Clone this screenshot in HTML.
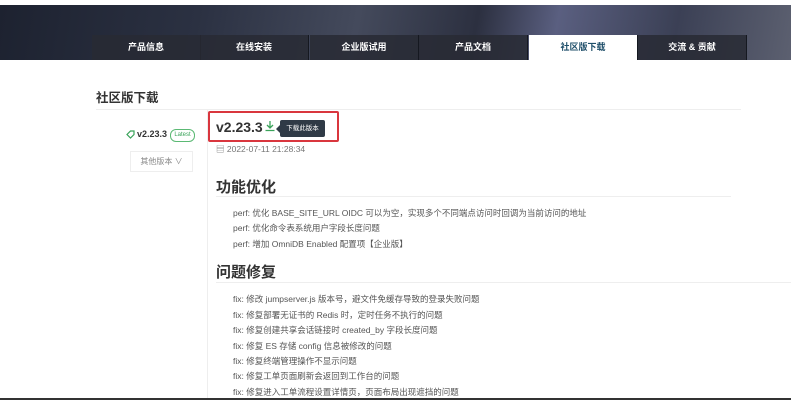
<!DOCTYPE html>
<html><head><meta charset="utf-8"><style>
body{margin:0;width:791px;height:400px;overflow:hidden;background:#fff;font-family:"Liberation Sans","Noto Sans CJK SC",sans-serif;position:relative}
.ab{position:absolute}
.banner{left:0;top:5px;width:791px;height:55px;background:linear-gradient(100deg,#1d2230 0%,#2b3142 25%,#444a5c 45%,#2c3040 60%,#5a5f80 70%,#3b4055 85%,#5c6070 100%)}
.tab{top:35px;height:25px;width:109px;background:rgba(40,42,52,.85);color:#fff;font-size:9px;font-weight:bold;text-align:center;line-height:25px;border-right:1px solid #151820;box-sizing:border-box}
.tab.on{background:#fff;color:#1f4f6a}
.li{left:233px;font-size:8.5px;color:#555;white-space:nowrap}
h2{margin:0;font-size:15px;font-weight:bold;color:#333;position:absolute;left:216px}
</style></head><body>
<div class="ab banner"></div>
<div class="ab tab" style="left:92px">产品信息</div>
<div class="ab tab" style="left:200px">在线安装</div>
<div class="ab tab" style="left:310px">企业版试用</div>
<div class="ab tab" style="left:419px">产品文档</div>
<div class="ab tab on" style="left:529px">社区版下载</div>
<div class="ab tab" style="left:638px">交流 &amp; 贡献</div>
<div class="ab" style="left:96px;top:87px;font-size:12.5px;font-weight:bold;color:#333">社区版下载</div>
<div class="ab" style="left:96px;top:109px;width:645px;height:1px;background:#eee"></div>
<div class="ab" style="left:207px;top:110px;width:1px;height:290px;background:#eee"></div>
<svg class="ab" style="left:126px;top:130px" width="9" height="9" viewBox="0 0 9 9"><path d="M1 4.5L4.5 1H8v3.5L4.5 8z" fill="none" stroke="#3aa35a" stroke-width="1.2"/></svg>
<div class="ab" style="left:137px;top:129px;font-size:9px;color:#333;font-weight:bold">v2.23.3</div>
<div class="ab" style="left:170px;top:129px;width:23px;height:11px;border:1px solid #5bb974;border-radius:6px;font-size:6px;color:#3aa35a;text-align:center;line-height:11px">Latest</div>
<div class="ab" style="left:130px;top:151px;width:63px;height:21px;border:1px solid #eee;box-sizing:border-box;font-size:8px;color:#888;text-align:center;line-height:20px">其他版本 ∨</div>
<div class="ab" style="left:208px;top:111px;width:131px;height:31px;border:2px solid #d9363e;box-sizing:border-box;border-radius:2px"></div>
<div class="ab" style="left:216px;top:119px;font-size:14px;font-weight:bold;color:#333">v2.23.3</div>
<svg class="ab" style="left:264px;top:120px" width="12" height="12" viewBox="0 0 12 12"><path d="M6 1v7M3 5l3 3 3-3M1.5 10.5h9" stroke="#3aa35a" stroke-width="1.3" fill="none"/></svg>
<div class="ab" style="left:280px;top:120px;width:45px;height:17px;background:#2f3a46;border-radius:2px;color:#fff;font-size:6.5px;text-align:center;line-height:17px">下载此版本</div>
<div class="ab" style="left:276px;top:125px;width:0;height:0;border:4px solid transparent;border-right-color:#2f3a46;border-left:0"></div>
<div class="ab" style="left:216px;top:143px;font-size:8.5px;color:#777">▤ 2022-07-11 21:28:34</div>
<h2 style="top:176px">功能优化</h2>
<div class="ab" style="left:216px;top:196px;width:515px;height:1px;background:#eee"></div>
<div class="ab li" style="top:207px">perf: 优化 BASE_SITE_URL OIDC 可以为空，实现多个不同端点访问时回调为当前访问的地址</div>
<div class="ab li" style="top:222px">perf: 优化命令表系统用户字段长度问题</div>
<div class="ab li" style="top:238px">perf: 增加 OmniDB Enabled 配置项【企业版】</div>
<h2 style="top:261px">问题修复</h2>
<div class="ab" style="left:216px;top:282px;width:575px;height:1px;background:#eee"></div>
<div class="ab li" style="top:293px">fix: 修改 jumpserver.js 版本号，避文件免缓存导致的登录失败问题</div>
<div class="ab li" style="top:309px">fix: 修复部署无证书的 Redis 时，定时任务不执行的问题</div>
<div class="ab li" style="top:324px">fix: 修复创建共享会话链接时 created_by 字段长度问题</div>
<div class="ab li" style="top:340px">fix: 修复 ES 存储 config 信息被修改的问题</div>
<div class="ab li" style="top:355px">fix: 修复终端管理操作不显示问题</div>
<div class="ab li" style="top:370px">fix: 修复工单页面刷新会返回到工作台的问题</div>
<div class="ab li" style="top:386px">fix: 修复进入工单流程设置详情页，页面布局出现遮挡的问题</div>
<div class="ab" style="left:0;top:398px;width:791px;height:2px;background:#333"></div>
</body></html>
